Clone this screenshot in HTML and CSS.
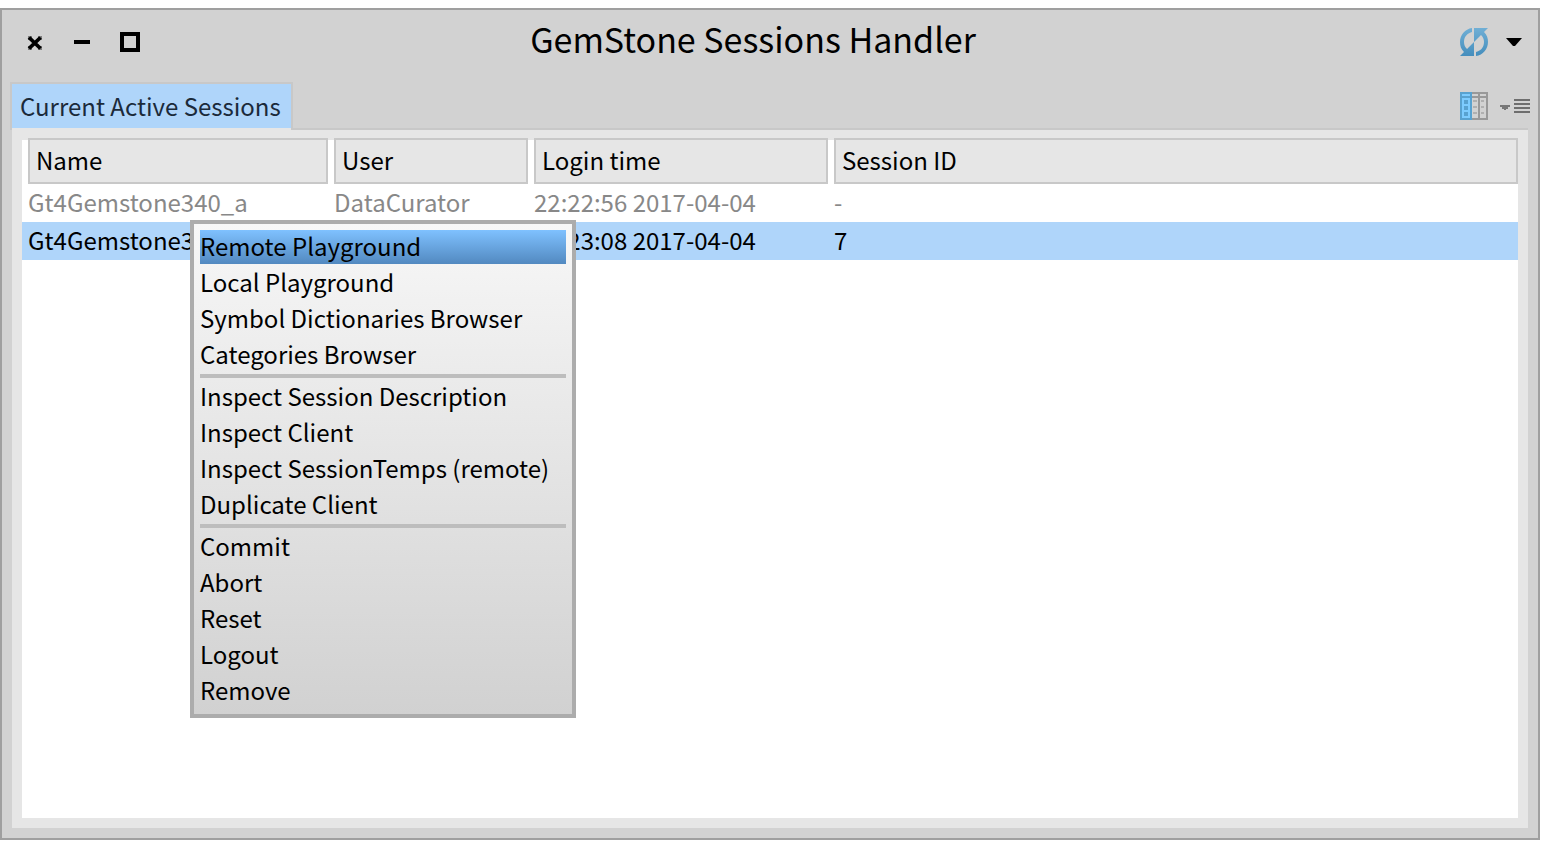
FILE: index.html
```html
<!DOCTYPE html>
<html lang="en">
<head>
<meta charset="utf-8">
<title>GemStone Sessions Handler</title>
<link rel="stylesheet" href="styles.css">
</head>
<body>
<main class="window">
  <header class="titlebar">
    <div class="controls">
      <button class="control" type="button" aria-label="Close">
        <svg viewBox="0 0 34 34"><path d="M11 12.500L22.500 23.500M22.500 12.500L11 23.500" stroke="#000" stroke-width="3.800"/><path d="M10 11h4v4h-4zM20 11h4v4h-4zM10 21h4v4h-4zM20 21h4v4h-4z" fill="#000" fill-opacity=".4"/></svg>
      </button>
      <button class="control" type="button" aria-label="Minimize">
        <svg viewBox="0 0 34 34"><path d="M8 15h16v4H8z"/></svg>
      </button>
      <button class="control" type="button" aria-label="Maximize">
        <svg viewBox="0 0 34 34"><path d="M8 9h16v16H8z" fill="none" stroke="#000" stroke-width="4"/></svg>
      </button>
    </div>
    <h1 class="title">GemStone Sessions Handler</h1>
    <button class="icon-button refresh" type="button" aria-label="Refresh">
      <svg class="icon" viewBox="0 0 28 28">
        <defs><linearGradient id="blue" x1="0" y1="0" x2="0" y2="28" gradientUnits="userSpaceOnUse"><stop offset="0" stop-color="#70afd5"/><stop offset="1" stop-color="#458ebd"/></linearGradient></defs>
        <path fill="url(#blue)" d="M14 0H28L24 4C27 7 28 10 28 14C28 21 23 27 16 28V24C20 23 24 20 24 14C24 11 23 9 21 7L14 14Z"/>
        <path fill="url(#blue)" d="M14 28H0L4 24C1 21 0 18 0 14C0 7 5 1 12 0V4C8 5 4 8 4 14C4 17 5 19 7 21L14 14Z"/>
      </svg>
    </button>
    <button class="icon-button" type="button" aria-label="Window menu">
      <svg class="arrow" viewBox="0 0 16 8"><path d="M0 0H16L9 8H7Z"/></svg>
    </button>
  </header>

  <nav class="tabs">
    <button class="tab" type="button">Current Active Sessions</button>
    <div class="tools">
      <button class="icon-button" type="button" aria-label="Columns">
        <svg class="icon" viewBox="0 0 28 28">
          <path d="M12 1H27V27H12M12 5H27M19 1V27" fill="none" stroke="#999" stroke-width="2"/>
          <path d="M13 9h4M21 9h3M13 15h4M21 15h3M13 21h4M21 21h3" stroke="#b0b0b0" stroke-width="2"/>
          <path d="M1 1H11V27H1ZM1 5H11" fill="#7dccff" stroke="#58a2d0" stroke-width="2"/>
          <path d="M4 8h4v4H4zM4 14h4v4H4zM4 20h4v4H4z" fill="#58a2d0"/>
        </svg>
      </button>
      <button class="icon-button" type="button" aria-label="Tab menu">
        <svg class="menu-icon" viewBox="0 0 30 14"><path d="M0 6H10V8H8V10H6V11H4V10H2V8H0Z" fill="#777"/><path d="M14 0h16v2H14zM14 4h16v2H14zM14 8h16v2H14zM14 12h16v2H14z" fill="#6e6e6e"/></svg>
      </button>
    </div>
  </nav>

  <section class="panel">
    <div class="list">
      <table class="sessions">
        <colgroup><col class="col-name"><col class="col-user"><col class="col-login"><col></colgroup>
        <thead>
          <tr>
            <th scope="col"><div class="heading">Name</div></th>
            <th scope="col"><div class="heading">User</div></th>
            <th scope="col"><div class="heading">Login time</div></th>
            <th scope="col"><div class="heading">Session ID</div></th>
          </tr>
        </thead>
        <tbody>
          <tr class="inactive"><td>Gt4Gemstone340_a</td><td>DataCurator</td><td>22:22:56 2017-04-04</td><td>-</td></tr>
          <tr class="selected"><td>Gt4Gemstone340_a</td><td>DataCurator</td><td>22:23:08 2017-04-04</td><td>7</td></tr>
        </tbody>
      </table>
    </div>
    <div class="menu" role="menu">
      <button class="item active" type="button" role="menuitem">Remote Playground</button>
      <button class="item" type="button" role="menuitem">Local Playground</button>
      <button class="item" type="button" role="menuitem">Symbol Dictionaries Browser</button>
      <button class="item" type="button" role="menuitem">Categories Browser</button>
      <hr class="divider">
      <button class="item" type="button" role="menuitem">Inspect Session Description</button>
      <button class="item" type="button" role="menuitem">Inspect Client</button>
      <button class="item" type="button" role="menuitem">Inspect SessionTemps (remote)</button>
      <button class="item" type="button" role="menuitem">Duplicate Client</button>
      <hr class="divider">
      <button class="item" type="button" role="menuitem">Commit</button>
      <button class="item" type="button" role="menuitem">Abort</button>
      <button class="item" type="button" role="menuitem">Reset</button>
      <button class="item" type="button" role="menuitem">Logout</button>
      <button class="item" type="button" role="menuitem">Remove</button>
    </div>
  </section>
</main>
</body>
</html>
```
FILE: styles.css
```css
* {
  box-sizing: border-box;
}

body {
  margin: 0;
  padding: 8px 4px 4px 0;
  min-height: 100vh;
  display: flex;
  background: #fff;
  color: #000;
  font: 24px/32px "Noto Sans CJK SC", "Noto Sans", sans-serif;
}

button {
  margin: 0;
  padding: 0;
  border: 0;
  background: none;
  color: inherit;
  font: inherit;
  text-align: left;
}

svg {
  display: block;
}

.window {
  flex: 1;
  display: flex;
  flex-direction: column;
  border: 2px solid #9f9f9f;
  background: #d2d2d2;
}

.titlebar {
  display: grid;
  grid-template-columns: 1fr auto 1fr auto;
  align-items: center;
  column-gap: 18px;
  height: 72px;
  padding: 0 16px 8px;
}

.controls {
  display: flex;
  gap: 14px;
  justify-self: start;
}

.control {
  width: 34px;
  height: 34px;
}

.title {
  margin: 0;
  padding-bottom: 6px;
  font-size: 34px;
  font-weight: 400;
  line-height: 48px;
}

.refresh {
  justify-self: end;
}

.icon {
  width: 28px;
  height: 28px;
}

.arrow {
  width: 16px;
  height: 8px;
}

.menu-icon {
  width: 30px;
  height: 14px;
}

.tabs {
  display: flex;
  height: 48px;
  padding: 0 10px 0 8px;
}

.tab {
  padding: 0 10px 2px 8px;
  border: 2px solid #c8c8c8;
  border-bottom: 0;
  background: #afd5fa;
  box-shadow: inset 0 -2px #e6e6e6;
  color: #1b2a3a;
  white-space: nowrap;
}

.tools {
  flex: 1;
  display: flex;
  justify-content: flex-end;
  align-items: center;
  gap: 12px;
  padding-top: 2px;
  border-bottom: 2px solid #c8c8c8;
}

.tools .icon-button:last-child {
  margin-right: -2px;
}

.panel {
  position: relative;
  flex: 1;
  display: flex;
  margin: 0 10px 10px;
  padding: 8px 10px 10px;
  background: #e6e6e6;
}

.list {
  flex: 1;
  background: linear-gradient(#e6e6e6 2px, #fff 2px);
}

.sessions {
  width: 100%;
  table-layout: fixed;
  border-collapse: collapse;
}

.col-name {
  width: 306px;
}

.col-user {
  width: 200px;
}

.col-login {
  width: 300px;
}

.sessions th,
.sessions td {
  padding: 0 0 0 6px;
  font-weight: 400;
  text-align: left;
  white-space: nowrap;
}

.sessions td {
  height: 38px;
  padding-bottom: 2px;
}

.heading {
  height: 46px;
  padding: 0 6px;
  border: 2px solid #c8c8c8;
  background: #e6e6e6;
  line-height: 40px;
}

.inactive {
  color: #888;
}

.selected {
  background: #afd5fa;
}

.menu {
  position: absolute;
  top: 90px;
  left: 178px;
  width: 386px;
  padding: 6px 6px 4px;
  border: 4px solid #acacac;
  background: linear-gradient(#f7f7f7, #d1d1d1) padding-box;
}

.item {
  display: block;
  width: 100%;
  height: 34px;
  margin-bottom: 2px;
  padding-bottom: 2px;
  white-space: nowrap;
}

.active {
  background: linear-gradient(#7fc1ff, #5289c0);
}

.divider {
  height: 4px;
  margin: 0 0 2px;
  border: 0;
  background: #bdbdbd;
}
```
